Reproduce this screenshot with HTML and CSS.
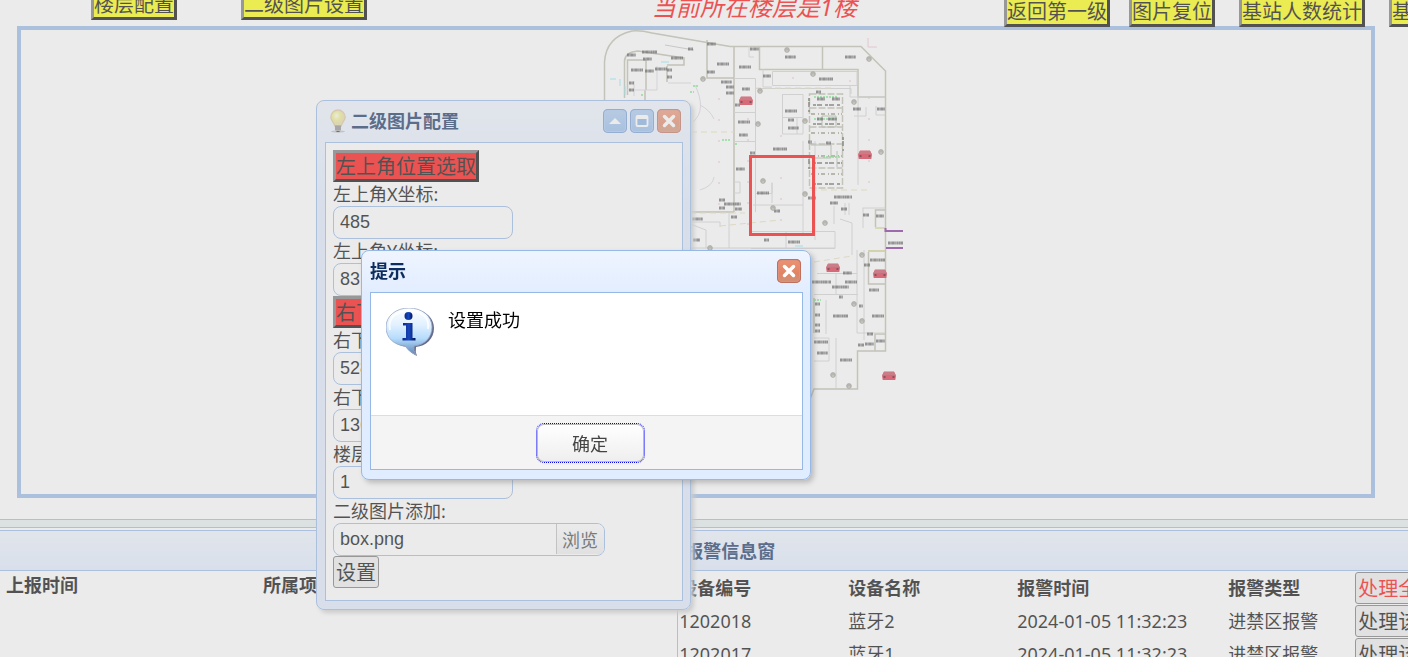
FILE: index.html
```html
<!DOCTYPE html>
<html lang="zh-CN">
<head>
<meta charset="utf-8">
<title>二级图片配置</title>
<link rel="stylesheet" href="styles.css">
</head>
<body>
<main class="page">
  <header class="toolbar">
    <div class="tools tools-left">
      <button class="tool">楼层配置</button>
      <button class="tool">二级图片设置</button>
    </div>
    <p class="floor-title">当前所在楼层是1楼</p>
    <div class="tools tools-right">
      <button class="tool">返回第一级</button>
      <button class="tool">图片复位</button>
      <button class="tool">基站人数统计</button>
      <button class="tool">基站</button>
    </div>
  </header>

  <section class="map">
    <svg class="plan" width="310" height="464" viewBox="600 30 310 464" fill="none" aria-label="楼层平面图">
      <defs>
        <g id="car">
          <path d="M-5-4.500h10l2 4-.7 4.500h-12.600L-7-.5z" fill="#dc2840"/>
          <path d="M-5-4h10l1.500 3h-13z" fill="#c84858"/>
          <path d="M-5.500 1h2M3.500 1h2" stroke="#500818" stroke-width="2"/>
        </g>
        <g id="sta"><circle r="2.400" fill="#aaa89c" stroke="#9a9890" stroke-width=".8"/><path d="M-1 1h2" stroke="#ddd" stroke-width=".7"/></g>
      </defs>
      <!-- outer walls -->
      <g stroke="#bcbcac" stroke-width="1.500">
        <path d="M604.500 112V62Q606 37 632 31Q640 30 652 33L730 46.500H861L885.500 71V351H857.500V389H814L800 424"/>
        <path d="M624.500 98V61Q625 52 638 51L684 58v7H667M734 46.500V212M759.500 46V69.500H858V97H885M822.500 46V69M707 40v38h27M690 212h44M875.500 227V210H885"/>
        <path d="M627.500 95V60H646M646 60v30M631 110h14V90M667 66v16"/>
        <path d="M809.500 94h33V188h-33zM809.500 108h33M809.500 127h33M809.500 144h33M809.500 168h33" stroke-dasharray="7 2"/>
        <path d="M868.500 252V284H885M868 251h17M875 351V334h10M814 298v35"/>
      </g>
      <!-- partitions -->
      <g stroke="#d2d2d2">
        <path d="M772.500 71.500H857V85.500H772.500zM763 69v18h9M734 78.500h21.500V212M734 112.500h21M734 141.500h21M755 88.500h96V94M782.500 94.500H803V134H782.500V94M782.500 117.500h20M797 118v16M803 141v64M734 193h6v-11h-6M756 193.500h16v-11M772 183v20M753 205H803M815 141v99M858 97v88M862.500 208h23M863 208v20M850 86v11h35M885 115h-9v-9M866 107v9h-12"/>
        <path d="M690 158v54M690 224l16 6v18M729 212v36M690 248h145M751 231.500h84v17h-84M786 231v18M803 205v30M690 222h30v5M840 219l12 4v32M817 273.500h40M857 250V333M864 250v90M814 294.500h44M836 273v22M836 338V388M814 338h15v23h-15M857 333h28M826 300v34M845 203v12M849 203v12M834 206v18"/>
        <path d="M627 90h30M634 81v15M657 66v24M668 83h23M754 57h-5V46M695 85q12 25-2 37M700 105q10 5 14 14M700 190q13-4 14-13" stroke="#d9d6df"/>
      </g>
      <path d="M755 88h80M691 132h43M690 213h55M720 226l60-6M814 262l38-6M811 190h60" stroke="#e8e0b8" stroke-dasharray="6 4"/>
      <path d="M811 114h31M811 133h31M811 174h31M811 156h31" stroke="#a9a996" stroke-width="2" stroke-dasharray="4 3 1 2"/>
      <path d="M813 105h28M813 124h28M813 163h29M813 184h28M809 98v14M843 137v14M809 155v14" stroke="#606058" stroke-width="1.500" stroke-dasharray="3 1 5 3"/>
      <path d="M822 116h14v11h-14zM811 145h20v13h-20M837 151v16" stroke="#aeb4a6"/>
      <path d="M722 140h8M735 144h3M693 86h5M690 92h4M642 94v3M814 97h24M814 119h24M823 157h17M814 300h7" stroke="#68e878" stroke-width="1.500" stroke-dasharray="2 1"/>
      <path d="M610 79h6M625 86v9M661 62h8M620 79v7M795 246h8" stroke="#88e8f8"/>
      <path d="M665 45l29 5" stroke="#c4c4c4"/>
      <path d="M868 38v9h9" stroke="#f0c4d4"/>
      <path d="M748 97v130M781 135v95M869 97v90M719 98v120M793 77v16M850 80v7" stroke="#f0b8c0" stroke-dasharray="2 19"/>
      <!-- room captions -->
      <g stroke="#303030" stroke-width="3" stroke-dasharray="2 .3 1.300 .2 3 .4 1 .3" opacity=".7">
        <path d="M627 55h9M642 52h15M643 59h9M631 70h12M645 71h9M655 69h12M667 70h5M667 77h5M671 58h12M688 49h5M707 44h9M717 64h12M707 72h8M721 82h11M726 87h8M726 93h8M739 67h12M742 89h8M735 105h5M738 122h12M739 135h9M736 169h9M750 49h9M763 76h8M785 57h11M845 57h11M819 79h14M816 92h5M785 111h12M788 120h6M788 128h11M773 149h14M853 109h8M877 109h8M757 193h12M774 211h6M719 200h6M719 208h6M724 204h17M735 209h7M692 219h11M731 217h6M834 197h18M830 203h8M841 209h6M863 215h6M876 216h8M750 153h5M629 83h5M629 90h5M808 142h4M808 198h8"/>
        <path d="M693 240h7M764 240h5M788 242h12M888 243h15M870 260h15M864 265h6M812 282h19M843 273h9M845 282h12M832 287h17M869 290h10M839 297h4M833 316h15M859 306h4M872 316h12M867 334h6M858 345h6M865 344h9M876 341h9M814 342h14M817 353h11M840 360h12M815 304h5M815 315h5M815 325h5M815 331h5M817 99h8M832 99h8M817 119h6M828 119h9M826 143h5"/>
      </g>
      <g>
        <use href="#sta" x="787" y="50"/><use href="#sta" x="703" y="79"/><use href="#sta" x="760" y="91"/><use href="#sta" x="758" y="124"/><use href="#sta" x="805" y="121"/><use href="#sta" x="813" y="74"/><use href="#sta" x="869" y="59"/><use href="#sta" x="854" y="102"/><use href="#sta" x="881" y="152"/><use href="#sta" x="763" y="181"/><use href="#sta" x="805" y="194"/><use href="#sta" x="773" y="208"/><use href="#sta" x="825" y="223"/><use href="#sta" x="862" y="255"/><use href="#sta" x="854" y="304"/><use href="#sta" x="862" y="321"/><use href="#sta" x="833" y="375"/><use href="#sta" x="849" y="386"/><use href="#sta" x="710" y="248"/>
      </g>
      <path d="M875 228h10M868 251h17" stroke="#d8d890" stroke-width="1.500"/>
      <path d="M885.500 228v4M886 231h17M886 248h17" stroke="#7c2898" stroke-width="2"/>
      <use href="#car" x="746" y="101"/><use href="#car" x="865" y="155"/><use href="#car" x="833" y="268"/><use href="#car" x="880" y="274"/><use href="#car" x="889" y="376"/>
      <rect x="750.500" y="156.500" width="63" height="78" stroke="#f00" stroke-width="3"/>
    </svg>
  </section>

  <div class="splitter"></div>

  <div class="panels">
    <section class="panel">
      <h2 class="panel-head"></h2>
      <table class="grid report">
        <tr><th class="c-time">上报时间</th><th>所属项目</th></tr>
      </table>
    </section>
    <section class="panel panel-alarm">
      <h2 class="panel-head">报警信息窗</h2>
      <table class="grid alarm">
        <colgroup><col class="c-id"><col class="c-name"><col class="c-date"><col class="c-type"><col class="c-act"></colgroup>
        <tr><th>设备编号</th><th>设备名称</th><th>报警时间</th><th>报警类型</th><td><button class="plain danger">处理全部</button></td></tr>
        <tr><td>1202018</td><td>蓝牙2</td><td>2024-01-05 11:32:23</td><td>进禁区报警</td><td><button class="plain">处理该条</button></td></tr>
        <tr><td>1202017</td><td>蓝牙1</td><td>2024-01-05 11:32:23</td><td>进禁区报警</td><td><button class="plain">处理该条</button></td></tr>
      </table>
    </section>
  </div>
</main>

<section class="window config">
  <header class="window-head">
    <svg class="bulb" width="24" height="24" viewBox="0 0 24 24">
      <defs><radialGradient id="glow" cx=".4" cy=".35"><stop offset="0" stop-color="#fffff0"/><stop offset=".55" stop-color="#eeee88"/><stop offset="1" stop-color="#e8dca0"/></radialGradient></defs>
      <ellipse cx="12" cy="22.500" rx="7" ry="1.200" fill="#b8bcc8"/>
      <path d="M12 1a7.200 7.200 0 0 0-7.200 7.200c0 3.400 3.400 5 4 9h6.400c.6-4 4-5.600 4-9A7.200 7.200 0 0 0 12 1z" fill="url(#glow)" stroke="#dcc4a0" stroke-width="1.300"/>
      <path d="M9 16h6v5l-1.500 2h-3L9 21z" fill="#a8a8a8"/><path d="M9 18h6M9 20h6" stroke="#777"/><path d="M10.500 22.500h3" stroke="#333"/>
    </svg>
    <h2 class="window-title">二级图片配置</h2>
    <button class="win-btn" aria-label="折叠"><svg width="24" height="24" viewBox="0 0 24 24"><path d="M6 15l6-6 6 6z" fill="#fff"/></svg></button>
    <button class="win-btn" aria-label="最大化"><svg width="24" height="24" viewBox="0 0 24 24"><rect x="6.500" y="7" width="11" height="10" rx="1" fill="#82ade2" stroke="#fff" stroke-width="1.800"/><path d="M6.500 8.500h11" stroke="#fff" stroke-width="3"/></svg></button>
    <button class="win-btn win-close" aria-label="关闭"><svg width="24" height="24" viewBox="0 0 24 24"><path d="M7.500 7.500l9 9m0-9l-9 9" stroke="#fff" stroke-width="3.500" stroke-linecap="round"/></svg></button>
  </header>
  <form class="window-body config-form">
    <button type="button" class="pick">左上角位置选取</button>
    <label for="x1">左上角X坐标:</label><input class="box" id="x1" value="485">
    <label for="y1">左上角Y坐标:</label><input class="box" id="y1" value="83">
    <button type="button" class="pick">右下角位置选取</button>
    <label for="x2">右下角X坐标:</label><input class="box" id="x2" value="528">
    <label for="y2">右下角Y坐标:</label><input class="box" id="y2" value="136">
    <label for="floor">楼层:</label><input class="box" id="floor" value="1">
    <label for="file">二级图片添加:</label>
    <div class="file"><input class="file-name" id="file" value="box.png" readonly><button type="button" class="browse">浏览</button></div>
    <button type="button" class="plain">设置</button>
  </form>
</section>

<div class="mask"></div>

<section class="window message" role="dialog" aria-labelledby="msg-title">
  <header class="window-head">
    <h2 class="window-title" id="msg-title">提示</h2>
    <button class="win-btn win-close" aria-label="关闭"><svg width="24" height="24" viewBox="0 0 24 24"><path d="M7.500 7.500l9 9m0-9l-9 9" stroke="#fff" stroke-width="3.500" stroke-linecap="round"/></svg></button>
  </header>
  <div class="window-body">
    <div class="message-text">
      <svg width="48" height="48" viewBox="0 0 48 48">
        <defs>
          <linearGradient id="bub" x1="0" y1="0" x2="0" y2="1"><stop offset="0" stop-color="#fff"/><stop offset=".35" stop-color="#e2f1ff"/><stop offset=".65" stop-color="#b5dcfc"/><stop offset="1" stop-color="#5a82b4"/></linearGradient>
          <linearGradient id="ink" x1="0" y1="0" x2="1" y2="0"><stop offset="0" stop-color="#0a2688"/><stop offset=".5" stop-color="#1747bd"/><stop offset="1" stop-color="#02145c"/></linearGradient>
        </defs>
        <path d="M25 1C12 1 2 9 2 20c0 10 8 18 19 19q3 6 10 9-2-4-1-9c10-1 18-8 18-19C48 9 38 1 25 1z" fill="#40466e" opacity=".8"/>
        <path d="M23 0C10 0 0 8 0 19c0 11 8 18 19 19q4 6 11 9-3-4-2-9c11-1 18-9 18-19C46 8 36 0 23 0z" fill="url(#bub)" stroke="#96a8c8" stroke-width=".8"/>
        <path d="M4 22C1 10 10 3 23 3s21 7 19 18" fill="none" stroke="#fff" stroke-width="2" opacity=".8"/>
        <circle cx="22.500" cy="8" r="4" fill="url(#ink)"/>
        <path d="M17 15h9.500v15h3v2.500H16.500V30H20V17.500h-3z" fill="url(#ink)"/>
      </svg>
      <p class="message-copy">设置成功</p>
    </div>
    <div class="message-actions"><button class="ok">确定</button></div>
  </div>
</section>
</body>
</html>
```
FILE: styles.css
```css
* { box-sizing: border-box; }

html, body { height: 100%; }

body {
  margin: 0;
  overflow: hidden;
  background: #fff;
  color: #000;
  font: 18px/24px "Noto Sans", "Noto Sans CJK SC", sans-serif;
}

button, input { font-family: inherit; margin: 0; }
h2, p { margin: 0; }

.page { height: 100%; overflow: hidden; display: flex; flex-direction: column; }

/* Toolbar */
.toolbar {
  position: relative;
  z-index: 1;
  display: flex;
  align-items: flex-end;
  height: 27px;
  margin-bottom: -1px;
  padding-left: 91px;
  flex: none;
}
.tools { display: flex; flex: none; }
.tools-left { gap: 64px; padding-bottom: 7px; }
.tools-right { gap: 24px; width: 404px; }
.tool, .pick {
  flex: none;
  height: 32px;
  padding: 2px 0 0;
  border: 3px outset #767676;
  border-color: #767676 #000 #000 #767676;
  background: #ff0;
  color: #000;
  font-size: 20px;
  line-height: 24px;
}
.tools-right .tool:first-child { margin-right: -5px; }
.floor-title {
  margin: 0 147px 2px auto;
  color: #f00;
  font-size: 24px;
  line-height: 36px;
  font-style: italic;
  white-space: nowrap;
}

/* Map */
.map {
  display: flex;
  justify-content: center;
  flex: none;
  margin: 0 33px 21px 17px;
  border: 4px solid #95b8e7;
}
.plan { display: block; margin-left: 118px; }

.splitter {
  flex: none;
  height: 9px;
  margin-bottom: 2px;
  border: solid #95b8e7;
  border-width: 1px 0;
  background: #e6eeee;
}

/* Lower panels */
.panels { display: flex; flex: 1; min-height: 0; }
.panel { flex: 0 0 48.1%; overflow: hidden; }
.panel-alarm { flex: 1; min-width: 0; border-left: 1px solid #95b8e7; }
.panel-head {
  height: 41px;
  padding: 0 7px;
  border: solid #95b8e7;
  border-width: 1px 0;
  background: linear-gradient(#eff5ff, #e0ecff);
  color: #0e2d5f;
  font-size: 18px;
  line-height: 40px;
}
.grid { border-collapse: collapse; table-layout: fixed; }
.grid th, .grid td { padding: 0; text-align: left; white-space: nowrap; }
.report { width: 520px; margin: 2px 0 0 6px; }
.c-time { width: 257px; }
.alarm { width: 780px; margin: 0 0 0 1px; }
.alarm tr { height: 33px; }
.c-id, .c-name { width: 169px; }
.c-date { width: 211px; }
.c-type { width: 127px; }

.plain {
  display: block;
  height: 32px;
  padding: 2px 2px 0;
  border: 1px solid #767676;
  border-radius: 3px;
  background: #efefef;
  color: #000;
  font-size: 20px;
  line-height: 28px;
}
.danger { color: #f00; }

/* Floating windows */
.window {
  position: absolute;
  padding: 0 7px 8px 8px;
  border: 1px solid #95b8e7;
  border-radius: 8px;
  background: linear-gradient(#eff5ff, #e0ecff 20%);
  box-shadow: 3px 3px 4px #ccc;
}
.config { left: 316px; top: 100px; width: 375px; }
.message {
  left: 361px;
  top: 250px;
  z-index: 3;
  width: 450px;
  padding-bottom: 9px;
  box-shadow: 3px 3px 5px rgba(120, 120, 120, .4);
}
.window-head { display: flex; align-items: center; gap: 3px; height: 41px; padding: 0 2px 1px 0; }
.bulb { margin-right: -2px; }
.window-title {
  flex: 1;
  color: #0e2d5f;
  font-size: 18px;
  line-height: 24px;
}
.window-body { border: 1px solid #95b8e7; background: #fff; }
.win-btn {
  width: 24px;
  height: 24px;
  padding: 0;
  border: 0;
  border-radius: 5px;
  background: linear-gradient(#aac9f0, #90b8ec);
  box-shadow: inset 0 0 0 1px #7199d2, inset 0 0 0 2px #a4c8f4;
}
.win-btn svg { display: block; }
.win-close {
  background: linear-gradient(#ed9374, #e08464 60%, #cc9478);
  box-shadow: inset 0 0 0 1px #bd705e, inset 0 0 0 2px #e09078;
}
.config .window-head { padding-left: 1px; }

.config-form {
  display: flex;
  flex-direction: column;
  align-items: flex-start;
  padding: 7px 7px 12px;
}
.config-form label { height: 24px; line-height: 24px; }
.pick { background: #f00; }
.box, .file-name {
  height: 33px;
  padding: 0 6px;
  border: 1px solid #95b8e7;
  border-radius: 8px;
  background: #fff;
  color: #000;
  font: 18px/24px "Liberation Sans", sans-serif;
}
.box { width: 180px; }
.file {
  display: flex;
  width: 272px;
  height: 33px;
  border: 1px solid #95b8e7;
  border-radius: 8px;
  overflow: hidden;
}
.file-name { flex: 1; min-width: 0; height: 31px; border: 0; }
.browse {
  flex: none;
  height: 30px;
  padding: 0 6px 0 5px;
  border: 0;
  border-left: 1px solid #bbb;
  background: linear-gradient(#fff, #eee);
  color: #444;
  font-size: 18px;
}

.mask { position: fixed; inset: 0; background: #ccc; opacity: .4; z-index: 2; }

.message-text { display: flex; gap: 14px; min-height: 122px; padding: 15px; }
.message-actions {
  display: flex;
  justify-content: center;
  padding: 7px 0 6px 7px;
  border-top: 1px solid #ddd;
  background: #f4f4f4;
}
.ok {
  width: 109px;
  height: 40px;
  padding: 0;
  border: 1px dotted #00f;
  border-radius: 8px;
  background: linear-gradient(#fff, #eee);
  box-shadow: inset 0 0 0 1px #bbb;
  color: #444;
  font-size: 18px;
}
```
